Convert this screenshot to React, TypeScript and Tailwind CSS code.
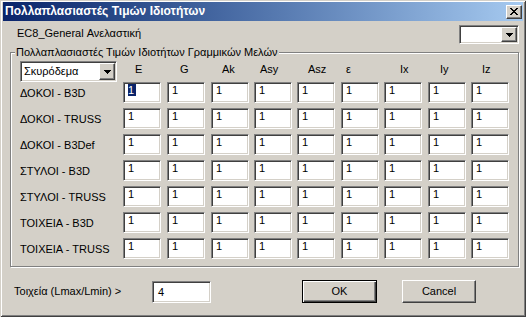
import React from 'react'

const sunken =
  'bg-white border border-t-[#808080] border-l-[#808080] border-b-white border-r-white shadow-[inset_1px_1px_0_#404040,inset_-1px_-1px_0_#d4d0c8]'
const raised =
  'bg-[#d4d0c8] border border-t-white border-l-white border-b-[#404040] border-r-[#404040] shadow-[inset_-1px_-1px_0_#808080]'

const cols = ['E', 'G', 'Ak', 'Asy', 'Asz', 'ε', 'Ix', 'Iy', 'Iz']
const colW = ['w-[44px]', 'w-[44px]', 'w-[43px]', 'w-[43px]', 'w-[44px]', 'w-[43px]', 'w-[44px]', 'w-[43px]', 'w-[38px]']
const headPad = ['pl-[12px]', 'pl-[13px]', 'pl-[11px]', 'pl-[6px]', 'pl-[11px]', 'pl-[5px]', 'pl-[16px]', 'pl-[12px]', 'pl-[11px]']

const rows = [
  'ΔΟΚΟΙ - B3D',
  'ΔΟΚΟΙ - TRUSS',
  'ΔΟΚΟΙ - B3Def',
  'ΣΤΥΛΟΙ - B3D',
  'ΣΤΥΛΟΙ - TRUSS',
  'ΤΟΙΧΕΙΑ - B3D',
  'ΤΟΙΧΕΙΑ - TRUSS',
]

function Arrow() {
  return (
    <svg width="7" height="4" viewBox="0 0 7 4" shapeRendering="crispEdges">
      <path d="M0 0h7v1H0zM1 1h5v1H1zM2 2h3v1H2zM3 3h1v1H3z" fill="#000" />
    </svg>
  )
}

function DropBtn() {
  return (
    <div className={`${raised} w-[16px] h-full flex items-center justify-center`}>
      <Arrow />
    </div>
  )
}

function Field({ value, selected }: { value: string; selected?: boolean }) {
  return (
    <div className={`${sunken} w-[38px] h-[21px] pl-[4px] pt-[1px] leading-[13px]`}>
      {selected ? <span className="bg-[#0a246a] text-white pr-[2px]">{value}</span> : value}
    </div>
  )
}

export default function App() {
  return (
    <div className="w-[526px] h-[317px] bg-[#d4d0c8] text-black text-[11px] font-['Liberation_Sans',Arial,sans-serif] flex flex-col shadow-[inset_1px_1px_0_#d4d0c8,inset_-1px_-1px_0_#404040,inset_2px_2px_0_#fff,inset_-2px_-2px_0_#808080]">
      {/* title bar */}
      <div className="mx-[3px] mt-[2px] h-[19px] bg-linear-to-r from-[#0a246a] to-[#a6caf0] flex items-center justify-between pl-[2px] pr-[1px]">
        <span className="text-white font-bold text-[12px] leading-[19px]">Πολλαπλασιαστές Τιμών Ιδιοτήτων</span>
        <div className={`${raised} w-[16px] h-[14px] flex items-center justify-center`}>
          <svg width="8" height="7" viewBox="0 0 8 7" shapeRendering="crispEdges">
            <path
              d="M0 0h2v1H0zM6 0h2v1H6zM1 1h2v1H1zM5 1h2v1H5zM2 2h4v1H2zM3 3h2v1H3zM2 4h4v1H2zM1 5h2v1H1zM5 5h2v1H5zM0 6h2v1H0zM6 6h2v1H6z"
              fill="#000"
            />
          </svg>
        </div>
      </div>

      {/* analysis line */}
      <div className="flex items-center justify-between pl-[17px] pr-[7px] mt-[4px] h-[19px]">
        <span className="-mt-[2px]">EC8_General Ανελαστική</span>
        <div className={`${sunken} w-[60px] h-[19px] flex justify-end p-[1px] pl-0`}>
          <DropBtn />
        </div>
      </div>

      {/* group box */}
      <div className="relative ml-[10px] mt-[8px] w-[509px] h-[215px] border border-[#808080] shadow-[1px_1px_0_#fff,inset_1px_1px_0_#fff] pl-[9px] pt-[8px]">
        <span className="absolute left-[4px] -top-[8px] bg-[#d4d0c8] px-[1px] leading-[14px]">
          Πολλαπλασιαστές Τιμών Ιδιοτήτων Γραμμικών Μελών
        </span>

        <div className="flex h-[21px]">
          <div className="w-[103px]">
            <div className={`${sunken} w-[97px] h-[21px] flex items-center justify-between p-[1px] pl-[3px]`}>
              <span className="leading-[13px]">Σκυρόδεμα</span>
              <DropBtn />
            </div>
          </div>
          {cols.map((c, i) => (
            <div key={c} className={`${colW[i]} ${headPad[i]} leading-[14px] pt-[1px]`}>
              {c}
            </div>
          ))}
        </div>

        <div className="flex flex-col gap-[5px]">
          {rows.map((r, ri) => (
            <div key={r} className="flex items-center h-[21px]">
              <div className="w-[103px] pt-[1px]">{r}</div>
              {cols.map((c, i) => (
                <div key={c} className={colW[i]}>
                  <Field value="1" selected={ri === 0 && i === 0} />
                </div>
              ))}
            </div>
          ))}
        </div>
      </div>

      {/* bottom */}
      <div className="flex items-center pl-[14px] mt-[13px]">
        <span className="w-[138px]">Τοιχεία (Lmax/Lmin) &gt;</span>
        <div className={`${sunken} w-[59px] h-[22px] pl-[5px] pt-[4px] leading-[13px]`}>4</div>
        <button className="ml-[91px] w-[75px] h-[23px] border border-black bg-[#d4d0c8] shadow-[inset_1px_1px_0_#fff,inset_-1px_-1px_0_#404040,inset_-2px_-2px_0_#808080] leading-[13px]">
          OK
        </button>
        <button className={`${raised} ml-[25px] w-[74px] h-[23px] leading-[13px]`}>Cancel</button>
      </div>
    </div>
  )
}
